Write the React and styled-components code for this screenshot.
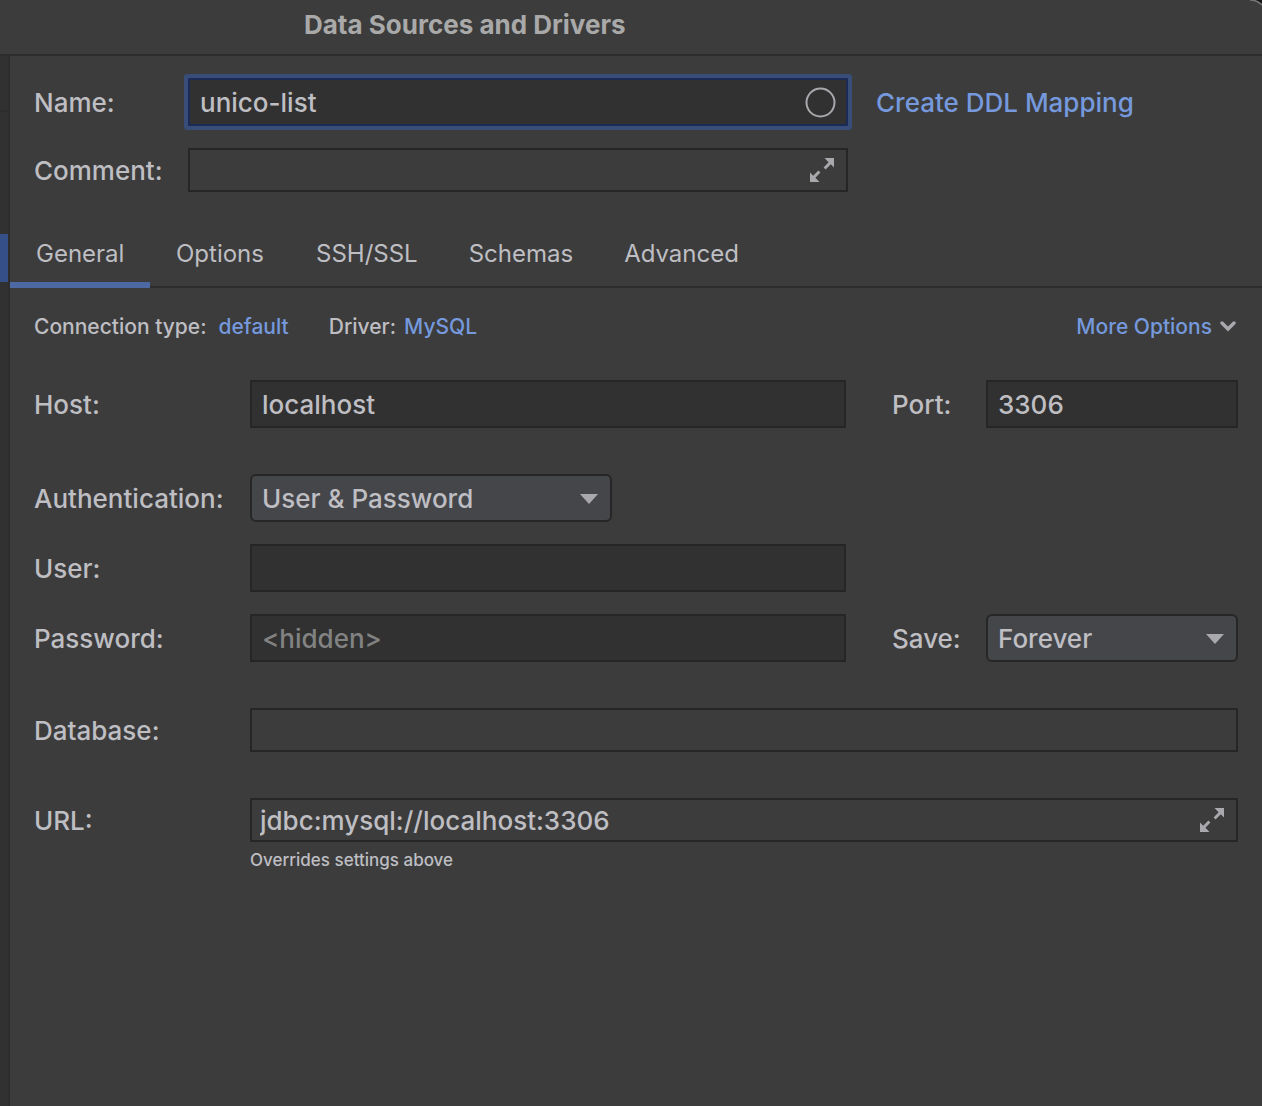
import React, { useState } from "react";
import styled, { createGlobalStyle } from "styled-components";

const color = {
  window: "#3c3c3c",
  rail: "#313131",
  line: "#2d2d2d",
  field: "#313131",
  border: "#262626",
  combo: "#45464a",
  text: "#bebec3",
  muted: "#828282",
  title: "#a9a9a9",
  link: "#7599dc",
  icon: "#a8a8ad",
  accent: "#4d69a3",
  selection: "#355088",
};

const GlobalStyle = createGlobalStyle`
  * { box-sizing: border-box; }
  body {
    margin: 0;
    background: ${color.window};
    color: ${color.text};
    font-family: Inter, "Liberation Sans", sans-serif;
    font-size: 26px;
    font-weight: 450;
    line-height: 32px;
  }
  button, input, select { font: inherit; color: inherit; margin: 0; }
`;

const Window = styled.div`
  position: relative;
  display: flex;
  flex-direction: column;
  min-height: 100vh;
  overflow: hidden;
`;

const TitleBar = styled.header`
  height: 56px;
  padding: 9px 24px 0 304px;
  border-bottom: 2px solid ${color.line};
`;

const Title = styled.h1`
  margin: 0;
  font-size: 26px;
  line-height: 32px;
  font-weight: 700;
  color: ${color.title};
`;

const Corner = styled.svg`
  position: absolute;
  top: 0;
  right: 0;
`;

const Body = styled.div`
  flex: 1;
  display: flex;
`;

const Rail = styled.aside`
  flex: none;
  width: 10px;
  border-right: 2px solid ${color.line};
  background: ${color.rail};
`;

const RailHeader = styled.div`
  height: 56px;
  border-bottom: 2px solid ${color.line};
`;

const RailSelection = styled.div`
  height: 48px;
  margin-top: 122px;
  background: ${color.selection};
`;

const Main = styled.main`
  flex: 1;
  min-width: 0;
`;

const Identity = styled.div`
  display: grid;
  grid-template-columns: 154px minmax(0, 1fr) 390px;
  row-gap: 22px;
  align-items: center;
  padding: 22px 24px 0;
`;

const Label = styled.label`
  padding-top: 2px;
  padding-left: ${(p) => (p.$indent ? "46px" : 0)};
  white-space: nowrap;
`;

const Field = styled.div`
  display: flex;
  align-items: center;
  min-width: 0;
  height: ${(p) => (p.$plain ? "44px" : "48px")};
  padding: ${(p) => (p.$plain ? "0 11px 0 8px" : "0 10px")};
  border: 2px solid ${(p) => (p.$focused ? "#1b2b58" : color.border)};
  background: ${(p) => (p.$plain ? "transparent" : color.field)};
  box-shadow: ${(p) => (p.$focused ? "0 0 0 4px #394d79" : "none")};
  border-radius: ${(p) => (p.$focused ? "1px" : 0)};
`;

const Input = styled.input`
  flex: 1;
  min-width: 0;
  height: 34px;
  padding: 1px 0 0;
  border: 0;
  outline: 0;
  background: transparent;
  &::placeholder { color: ${color.muted}; opacity: 1; }
`;

const IconButton = styled.button`
  display: flex;
  flex: none;
  padding: 0;
  border: 0;
  background: none;
  cursor: pointer;
`;

const Link = styled.a`
  color: ${color.link};
  text-decoration: none;
  white-space: nowrap;
`;

const MappingCell = styled.div`
  padding: 2px 0 0 28px;
`;

const Tabs = styled.div`
  display: flex;
  height: 66px;
  margin-top: 30px;
  border-bottom: 2px solid ${color.line};
`;

const Tab = styled.button`
  min-width: 140px;
  height: 66px;
  padding: 4px 25px 0 26px;
  border: 0;
  border-bottom: 6px solid ${(p) => (p.$active ? color.accent : "transparent")};
  background: none;
  font-size: 24px;
  font-weight: 400;
  line-height: 30px;
  text-align: left;
  white-space: nowrap;
  cursor: pointer;
`;

const Panel = styled.section`
  padding: 23px 24px 24px;
`;

const Summary = styled.div`
  display: flex;
  align-items: center;
  font-size: 21px;
  white-space: nowrap;
`;

const Fact = styled.div`
  display: flex;
  gap: ${(p) => p.$gap};
  margin-right: 40px;
`;

const MoreOptions = styled.button`
  display: flex;
  align-items: center;
  gap: 8px;
  margin-left: auto;
  padding: 0 2px 0 0;
  border: 0;
  background: none;
  color: ${color.link};
  cursor: pointer;
`;

const Form = styled.form`
  display: flex;
  flex-direction: column;
  gap: 46px;
  margin-top: 37px;
`;

const Group = styled.div`
  display: flex;
  flex-direction: column;
  gap: 22px;
`;

const Row = styled.div`
  display: grid;
  grid-template-columns: 216px minmax(0, 1fr) 140px 252px;
  align-items: center;
`;

const WideRow = styled.div`
  display: grid;
  grid-template-columns: 216px minmax(0, 1fr);
  align-items: center;
`;

const Note = styled.p`
  grid-column: 2;
  margin: 6px 0 0;
  font-size: 17px;
  line-height: 24px;
`;

const Combo = styled.div`
  display: grid;
  align-items: center;
  width: 100%;
  max-width: 362px;
  & > * { grid-area: 1 / 1; }
  & > svg { justify-self: end; margin-right: 14px; pointer-events: none; }
`;

const Select = styled.select`
  appearance: none;
  width: 100%;
  height: 48px;
  padding: 2px 40px 0 10px;
  border: 2px solid ${color.border};
  border-radius: 6px;
  background: ${color.combo};
`;

function ExpandIcon() {
  return (
    <svg width="26" height="26" viewBox="0 0 26 26" fill={color.icon} aria-hidden="true">
      <path d="M15.5 1H25v9.5l-3.2-3.2-5.2 5.2-2-2 5-5.2z" />
      <path d="M10.5 25H1v-9.5l3.2 3.2 5.2-5.2 2 2-5 5.2z" />
    </svg>
  );
}

function CircleIcon() {
  return (
    <svg width="32" height="32" viewBox="0 0 32 32" fill="none" aria-hidden="true">
      <circle cx="16.5" cy="16.5" r="14" stroke={color.icon} strokeWidth="2" />
    </svg>
  );
}

function ArrowIcon() {
  return (
    <svg width="18" height="12" viewBox="0 0 18 12" aria-hidden="true">
      <path d="M0 2h18L9 12z" fill={color.icon} />
    </svg>
  );
}

function ChevronIcon() {
  return (
    <svg width="16" height="12" viewBox="0 0 16 12" fill="none" aria-hidden="true">
      <path d="M2 2l6 6 6-6" stroke={color.icon} strokeWidth="3.4" strokeLinecap="round" />
    </svg>
  );
}

const tabs = ["General", "Options", "SSH/SSL", "Schemas", "Advanced"];

function ComboBox({ id, options }) {
  return (
    <Combo>
      <Select id={id}>
        {options.map((o) => <option key={o}>{o}</option>)}
      </Select>
      <ArrowIcon />
    </Combo>
  );
}

export default function App() {
  const [active, setActive] = useState("General");
  return (
    <>
      <GlobalStyle />
      <Window>
        <TitleBar>
          <Title>Data Sources and Drivers</Title>
        </TitleBar>
        <Corner width="14" height="8" viewBox="0 0 14 8" aria-hidden="true">
          <path d="M7 0H14V4Q11 1 7 0z" fill="#161616" />
          <path d="M2 0Q9 0 14 5" fill="none" stroke="#777777" strokeWidth="1.5" />
        </Corner>
        <Body>
          <Rail>
            <RailHeader />
            <RailSelection />
          </Rail>
          <Main>
            <Identity>
              <Label htmlFor="name">Name:</Label>
              <Field $focused>
                <Input id="name" defaultValue="unico-list" />
                <IconButton type="button" aria-label="Choose color"><CircleIcon /></IconButton>
              </Field>
              <MappingCell><Link href="#mapping">Create DDL Mapping</Link></MappingCell>
              <Label htmlFor="comment">Comment:</Label>
              <Field $plain>
                <Input id="comment" />
                <IconButton type="button" aria-label="Expand comment"><ExpandIcon /></IconButton>
              </Field>
            </Identity>
            <Tabs role="tablist">
              {tabs.map((t) => (
                <Tab key={t} type="button" role="tab" aria-selected={t === active} $active={t === active} onClick={() => setActive(t)}>
                  {t}
                </Tab>
              ))}
            </Tabs>
            <Panel>
              <Summary>
                <Fact $gap="12px">
                  <span>Connection type:</span>
                  <Link href="#type">default</Link>
                </Fact>
                <Fact $gap="8px">
                  <span>Driver:</span>
                  <Link href="#driver">MySQL</Link>
                </Fact>
                <MoreOptions type="button">More Options<ChevronIcon /></MoreOptions>
              </Summary>
              <Form>
                <Row>
                  <Label htmlFor="host">Host:</Label>
                  <Field><Input id="host" defaultValue="localhost" /></Field>
                  <Label htmlFor="port" $indent>Port:</Label>
                  <Field><Input id="port" defaultValue="3306" /></Field>
                </Row>
                <Group>
                  <Row>
                    <Label htmlFor="auth">Authentication:</Label>
                    <ComboBox id="auth" options={["User & Password", "No auth"]} />
                  </Row>
                  <Row>
                    <Label htmlFor="user">User:</Label>
                    <Field><Input id="user" /></Field>
                  </Row>
                  <Row>
                    <Label htmlFor="password">Password:</Label>
                    <Field><Input id="password" type="password" placeholder="<hidden>" /></Field>
                    <Label htmlFor="save" $indent>Save:</Label>
                    <ComboBox id="save" options={["Forever", "Until restart", "Never"]} />
                  </Row>
                </Group>
                <WideRow>
                  <Label htmlFor="database">Database:</Label>
                  <Field $plain><Input id="database" /></Field>
                </WideRow>
                <WideRow>
                  <Label htmlFor="url">URL:</Label>
                  <Field $plain>
                    <Input id="url" defaultValue="jdbc:mysql://localhost:3306" />
                    <IconButton type="button" aria-label="Expand URL"><ExpandIcon /></IconButton>
                  </Field>
                  <Note>Overrides settings above</Note>
                </WideRow>
              </Form>
            </Panel>
          </Main>
        </Body>
      </Window>
    </>
  );
}
